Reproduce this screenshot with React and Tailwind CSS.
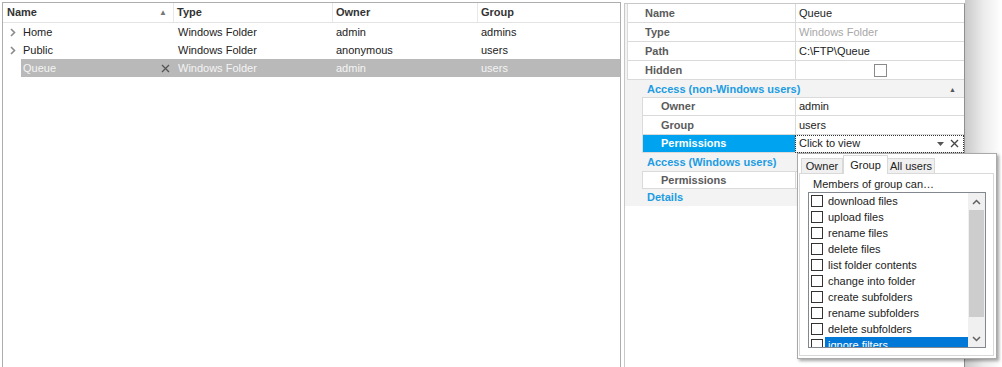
import React from 'react';

const files = [
  { name: 'Home', type: 'Windows Folder', owner: 'admin', group: 'admins', expand: true },
  { name: 'Public', type: 'Windows Folder', owner: 'anonymous', group: 'users', expand: true },
  { name: 'Queue', type: 'Windows Folder', owner: 'admin', group: 'users', selected: true },
];

const perms = [
  'download files',
  'upload files',
  'rename files',
  'delete files',
  'list folder contents',
  'change into folder',
  'create subfolders',
  'rename subfolders',
  'delete subfolders',
  'ignore filters',
];

function Chevron() {
  return (
    <svg width="6" height="9" viewBox="0 0 6 9">
      <path d="M1 1 L4.5 4.5 L1 8" fill="none" stroke="#8a8a8a" strokeWidth="1.6" />
    </svg>
  );
}

function FileList() {
  return (
    <div className="ml-[2px] mt-[2px] w-[619px] h-[365px] border-l border-t border-r border-[#adadad] bg-white">
      {/* header */}
      <div className="flex h-[20px] border-b border-[#e3e3e3] font-bold text-[#333] items-center">
        <div className="w-[171px] h-full flex items-center justify-between pl-[4px] pr-[6px] border-r border-[#e8e8e8]">
          <span>Name</span>
          <span className="text-[8px] text-[#777]">▲</span>
        </div>
        <div className="w-[159px] h-full flex items-center pl-[3px] border-r border-[#e8e8e8]">Type</div>
        <div className="w-[145px] h-full flex items-center pl-[3px] border-r border-[#e8e8e8]">Owner</div>
        <div className="flex-1 h-full flex items-center pl-[3px]">Group</div>
      </div>
      {files.map((f) => (
        <div key={f.name} className="flex h-[18px] items-center text-[#222]">
          <div className="w-[18px] flex items-center justify-center pl-[1px]">{f.expand && <Chevron />}</div>
          <div className={`flex-1 flex h-full items-center ${f.selected ? 'bg-[#b9b9b9] text-[#f4f4f4]' : ''}`}>
            <div className="w-[153px] pl-[2px] pr-[4px] flex items-center justify-between">
              <span>{f.name}</span>
              {f.selected && (
                <svg width="9" height="9" viewBox="0 0 9 9">
                  <path d="M1 1 L8 8 M8 1 L1 8" stroke="#555" strokeWidth="1.3" />
                </svg>
              )}
            </div>
            <div className="w-[159px] pl-[4px]">{f.type}</div>
            <div className="w-[145px] pl-[3px]">{f.owner}</div>
            <div className="flex-1 pl-[3px]">{f.group}</div>
          </div>
        </div>
      ))}
    </div>
  );
}

function PropRow({ name, children, nested, first, selected, dotted, short }) {
  return (
    <div className={`flex ${short ? 'h-[18px]' : 'h-[19px]'}`}>
      <div className={`${nested ? 'w-[17px]' : 'w-[2px]'} bg-[#f3f3f3]`} />
      <div
        className={`${nested ? 'w-[153px] pl-[18px]' : 'w-[168px] pl-[17px]'} flex items-center border-l border-b border-[#dadada] font-bold ${first ? 'border-t' : ''} ${selected ? 'bg-[#00a3f0] text-white' : 'text-[#5b5b5b]'}`}
      >
        {name}
      </div>
      <div
        className={`flex-1 flex items-center pl-[3px] ${first ? 'border-t' : ''} border-l border-b border-[#dadada] text-[#222] ${dotted ? 'outline outline-1 outline-dotted outline-[#333] -outline-offset-1' : ''}`}
      >
        {children}
      </div>
    </div>
  );
}

function Category({ label, arrow }) {
  return (
    <div className="h-[18px] flex items-center justify-between bg-[#f3f3f3] pl-[22px] pr-[8px] font-bold text-[#1b9ce3]">
      <span>{label}</span>
      {arrow && <span className="text-[7px] text-[#555]">▲</span>}
    </div>
  );
}

function PermPopup() {
  return (
    <div className="absolute left-[172px] top-[149px] w-[200px] h-[206px] bg-white border border-[#a9a9a9] shadow-[2px_2px_3px_rgba(0,0,0,0.35)] flex flex-col pl-[1px] pr-[2px]">
      <div className="flex items-end h-[19px] pl-[2px]">
        <div className="h-[15px] w-[42px] bg-[#f0f0f0] border border-b-0 border-[#d9d9d9] flex items-center justify-center text-[#222]">Owner</div>
        <div className="h-[19px] w-[45px] bg-white border border-b-0 border-[#d9d9d9] flex items-center justify-center text-[#222] -mb-[1px] relative z-10">Group</div>
        <div className="h-[15px] w-[47px] bg-[#f0f0f0] border border-b-0 border-l-0 border-[#d9d9d9] flex items-center justify-center text-[#222]">All users</div>
      </div>
      <div className="flex-1 border border-[#d9d9d9] bg-white pl-[8px] pr-[7px] mb-[2px]">
        <div className="h-[16px] flex items-end pl-[5px] text-[#222]">Members of group can…</div>
        <div className="mt-[2px] h-[156px] border border-[#828790] flex overflow-hidden">
          <div className="flex-1 flex flex-col">
            {perms.map((p, i) => (
              <div key={p} className="h-[16px] flex items-center shrink-0">
                <div className="w-[12px] h-[12px] border border-[#333] bg-white ml-[2px] mr-[2px] shrink-0" />
                <div className={`flex-1 h-full flex items-center pl-[3px] ${i === perms.length - 1 ? 'bg-[#0078d7] text-white' : 'text-[#222]'}`}>{p}</div>
              </div>
            ))}
          </div>
          <div className="w-[17px] bg-[#f0f0f0] flex flex-col items-center">
            <div className="h-[17px] flex items-center justify-center">
              <svg width="9" height="6" viewBox="0 0 9 6"><path d="M1 5 L4.5 1.5 L8 5" fill="none" stroke="#606060" strokeWidth="1.5" /></svg>
            </div>
            <div className="w-[15px] h-[107px] bg-[#cdcdcd]" />
            <div className="flex-1" />
            <div className="h-[17px] flex items-center justify-center">
              <svg width="9" height="6" viewBox="0 0 9 6"><path d="M1 1 L4.5 4.5 L8 1" fill="none" stroke="#606060" strokeWidth="1.5" /></svg>
            </div>
          </div>
        </div>
      </div>
    </div>
  );
}

function PropertyGrid() {
  return (
    <div className="relative mt-[3px] w-[341px] h-[364px] border-l border-t border-r border-l-[#c8c8c8] border-t-[#c8c8c8] border-r-[#8e8e8e] bg-white">
      <PropRow name="Name">Queue</PropRow>
      <PropRow name="Type"><span className="text-[#a8a8a8]">Windows Folder</span></PropRow>
      <PropRow name="Path">C:\FTP\Queue</PropRow>
      <PropRow name="Hidden">
        <div className="w-full flex justify-center pr-[3px]">
          <div className="w-[13px] h-[13px] border border-[#8a8a8a] bg-white" />
        </div>
      </PropRow>
      <Category label="Access (non-Windows users)" arrow />
      <div className="-mt-[1px]">
        <PropRow name="Owner" nested first>admin</PropRow>
        <PropRow name="Group" nested>users</PropRow>
        <PropRow name="Permissions" nested selected dotted short>
          <div className="flex-1 flex items-center justify-between pr-[5px]">
            <span>Click to view</span>
            <span className="flex items-center gap-[6px]">
              <svg width="7" height="4" viewBox="0 0 7 4"><path d="M0 0 L7 0 L3.5 4 Z" fill="#555" /></svg>
              <svg width="9" height="9" viewBox="0 0 9 9"><path d="M1 1 L8 8 M8 1 L1 8" stroke="#444" strokeWidth="1.3" /></svg>
            </span>
          </div>
        </PropRow>
      </div>
      <Category label="Access (Windows users)" />
      <PropRow name="Permissions" nested first short />
      <div className="-mt-[1px]">
        <Category label="Details" />
      </div>
      <PermPopup />
    </div>
  );
}

export default function App() {
  return (
    <div className="w-[1002px] h-[367px] bg-white flex overflow-hidden font-['Liberation_Sans',Arial,sans-serif] text-[11px] leading-none">
      <FileList />
      <div className="w-[3px]" />
      <PropertyGrid />
      <div className="w-[37px] h-full bg-gradient-to-r from-[#c9c9c9] via-[#ececec] to-white" />
    </div>
  );
}
